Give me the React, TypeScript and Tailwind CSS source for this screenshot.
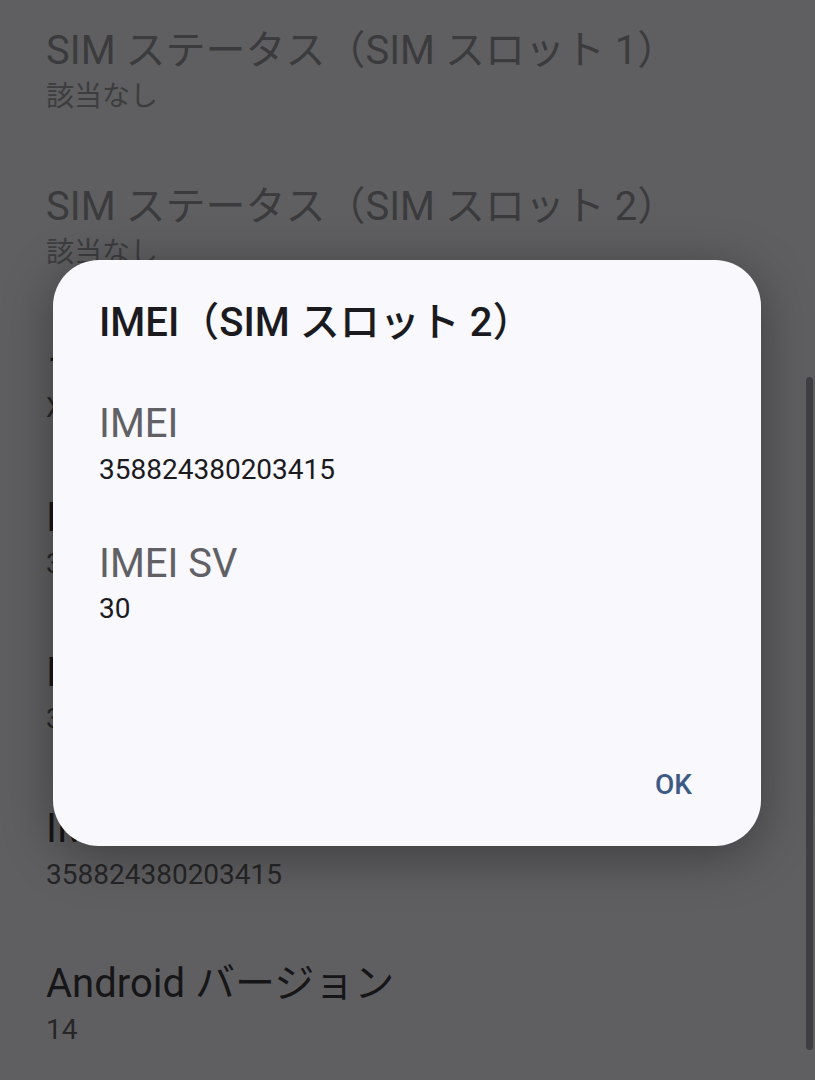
import React from "react";

const font = "font-['Roboto','Noto_Sans_CJK_JP',sans-serif]";

type Item = { title: string; sub: string; disabled?: boolean };

const items: Item[] = [
  { title: "SIM ステータス（SIM スロット 1）", sub: "該当なし", disabled: true },
  { title: "SIM ステータス（SIM スロット 2）", sub: "該当なし", disabled: true },
  { title: "モデル", sub: "XQ-DQ44" },
  { title: "IMEI（SIM スロット 1）", sub: "358824380203407" },
  { title: "IMEI SV（SIM スロット 1）", sub: "30" },
  { title: "IMEI（SIM スロット 2）", sub: "358824380203415" },
  { title: "Android バージョン", sub: "14" },
];

export default function App() {
  return (
    <div className={`relative h-[1080px] w-[815px] overflow-hidden bg-[#5f5f61] ${font}`}>
      {/* background list */}
      <div className="flex flex-col pl-[46px] pt-[28px]">
        {items.map((it, i) => (
          <div key={i} className="flex h-[155.5px] shrink-0 flex-col">
            <div
              className={`whitespace-nowrap text-[40px] leading-[46px] ${
                it.disabled ? "text-[#3b3b3e]" : "text-[#161618]"
              }`}
            >
              {it.title}
            </div>
            <div
              className={`mt-[5px] whitespace-nowrap text-[28px] leading-[36px] ${
                it.disabled ? "text-[#3d3d40]" : "text-[#262628]"
              }`}
            >
              {it.sub}
            </div>
          </div>
        ))}
      </div>

      {/* scrollbar */}
      <div className="absolute left-[806px] top-[377px] h-[673px] w-[7px] rounded-full bg-[#3f3f43]" />

      {/* dialog */}
      <div className="absolute left-[53px] top-[260px] flex h-[586px] w-[708px] flex-col rounded-[46px] bg-[#f8f8fd] pl-[46px] pt-[40px] shadow-[0_10px_50px_rgba(0,0,0,0.35)]">
        <div className="whitespace-nowrap text-[40px] font-medium leading-[46px] text-[#1b1b1f]">
          IMEI（SIM スロット 2）
        </div>
        <div className="mt-[55px] text-[40px] leading-[46px] text-[#606065]">IMEI</div>
        <div className="mt-[5px] text-[28px] leading-[36px] text-[#1b1b1f]">358824380203415</div>
        <div className="mt-[53px] text-[40px] leading-[46px] text-[#606065]">IMEI SV</div>
        <div className="mt-[4px] text-[28px] leading-[36px] text-[#1b1b1f]">30</div>
        <div className="flex-1" />
        <div className="flex justify-end pb-[43px] pr-[69px]">
          <span className="text-[28px] font-medium leading-[36px] text-[#3d5a85]">OK</span>
        </div>
      </div>
    </div>
  );
}
